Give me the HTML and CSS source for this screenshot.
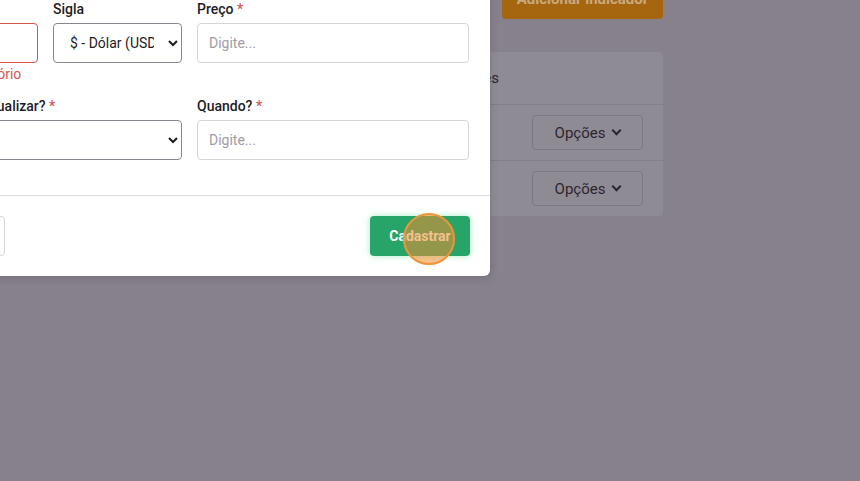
FILE: index.html
```html
<!DOCTYPE html>
<html lang="pt-BR">
<head>
    <meta charset="UTF-8">
    <meta name="viewport" content="width=device-width, initial-scale=1.0">
    <title>Indicadores</title>
    <link rel="stylesheet" href="styles.css">
</head>
<body>
    <div class="page">
        <div class="toolbar">
            <button class="btn-add">Adicionar indicador</button>
        </div>

        <div class="card">
            <div class="table-row table-head">
                <div>Nome</div>
                <div>Ações</div>
            </div>
            <div class="table-row">
                <div>Dólar</div>
                <div class="cell-actions"><button class="btn-options">Opções <span class="chev"></span></button></div>
            </div>
            <div class="table-row">
                <div>Euro</div>
                <div class="cell-actions"><button class="btn-options">Opções <span class="chev"></span></button></div>
            </div>
        </div>
    </div>

    <div class="modal">
        <form class="modal-body">
            <div class="field">
                <label>Nome <span class="req">*</span></label>
                <input type="text" class="invalid">
                <div class="error">Campo obrigatório</div>
            </div>
            <div class="field">
                <label>Sigla</label>
                <select>
                    <option>$ - Dólar (USD)</option>
                    <option>€ - Euro (EUR)</option>
                </select>
            </div>
            <div class="field">
                <label>Preço <span class="req">*</span></label>
                <input type="text" placeholder="Digite...">
            </div>
            <div class="field span-2">
                <label>Você deseja atualizar? <span class="req">*</span></label>
                <select>
                    <option></option>
                </select>
            </div>
            <div class="field">
                <label>Quando? <span class="req">*</span></label>
                <input type="text" placeholder="Digite...">
            </div>
        </form>
        <div class="modal-footer">
            <button class="btn-cancel">Cancelar</button>
            <button class="btn-save">Cadastrar</button>
        </div>
    </div>

    <div class="click-dot"></div>
</body>
</html>
```

FILE: styles.css
```css
body {
    font-family: Roboto, "Liberation Sans", sans-serif;
    background-color: #86818b;
    color: #2b2630;
    margin: 0;
    padding: 0;
    overflow: hidden;
    height: 481px;
    position: relative;
}

button {
    font-family: inherit;
    cursor: pointer;
}

/* page behind the modal */
.page {
    padding: 0 197px 0 200px;
    margin-top: -21px;
}

.toolbar {
    display: flex;
    justify-content: flex-end;
}

.btn-add {
    width: 161px;
    height: 40px;
    background-color: #a5660f;
    color: #c9a981;
    border: none;
    border-radius: 4px;
    font-size: 15px;
    font-weight: 700;
}

.card {
    margin-top: 33px;
    background-color: #8f8b94;
    border-radius: 4px;
}

.table-row {
    display: grid;
    grid-template-columns: 1fr 186px;
    align-items: center;
    padding: 0 20px;
    height: 56px;
    box-sizing: border-box;
    border-top: 1px solid #837e89;
    font-size: 15px;
}

.table-head {
    height: 52px;
    border-top: none;
}

.cell-actions {
    display: flex;
    justify-content: flex-end;
}

.btn-options {
    width: 111px;
    height: 35px;
    background: transparent;
    border: 1px solid #7c7884;
    border-radius: 4px;
    color: #2b2630;
    font-size: 15px;
    display: flex;
    align-items: center;
    justify-content: center;
    gap: 8px;
}

.chev {
    width: 5px;
    height: 5px;
    border-right: 2px solid #2b2630;
    border-bottom: 2px solid #2b2630;
    transform: translateY(-2px) rotate(45deg);
}

/* modal */
.modal {
    position: absolute;
    left: -115px;
    top: -21px;
    width: 605px;
    background: white;
    border-radius: 6px;
    box-shadow: 0 2px 8px rgba(0, 0, 0, 0.15);
}

.modal-body {
    display: grid;
    grid-template-columns: 133px 129px 272px;
    column-gap: 15px;
    row-gap: 12px;
    align-items: start;
    padding: 20px 20px 35px;
    border-bottom: 1px solid #dcdcdf;
    margin: 0;
}

.span-2 {
    grid-column: span 2;
}

.field label {
    display: block;
    font-size: 14px;
    font-weight: 500;
    line-height: 20px;
    margin-bottom: 4px;
    color: #1f1b24;
    white-space: nowrap;
}

.req {
    color: #d9534f;
}

.field input,
.field select {
    width: 100%;
    height: 40px;
    box-sizing: border-box;
    border: 1px solid #d6d6da;
    border-radius: 4px;
    padding: 0 11px;
    font-family: inherit;
    font-size: 14px;
    color: #1f1b24;
    background: white;
}

.field select {
    border-color: #8a8690;
    padding-left: 12px;
}

.field input::placeholder {
    color: #a09ca6;
}

.field input.invalid {
    border-color: #d9534f;
}

.error {
    font-size: 14px;
    line-height: 20px;
    color: #d9534f;
    margin-top: 1px;
}

.modal-footer {
    display: flex;
    justify-content: space-between;
    padding: 20px;
}

.btn-cancel {
    width: 100px;
    height: 40px;
    background: white;
    border: 1px solid #d3d6e0;
    border-radius: 4px;
    font-size: 14px;
}

.btn-save {
    width: 100px;
    height: 40px;
    background-color: #27a468;
    color: white;
    border: none;
    border-radius: 4px;
    font-size: 14px;
    font-weight: 700;
    box-shadow: 0 0 6px rgba(60, 220, 120, 0.45);
}

.click-dot {
    position: absolute;
    left: 403px;
    top: 213px;
    width: 48px;
    height: 48px;
    border-radius: 50%;
    border: 2px solid #f0943a;
    background: rgba(238, 140, 50, 0.55);
}
```
